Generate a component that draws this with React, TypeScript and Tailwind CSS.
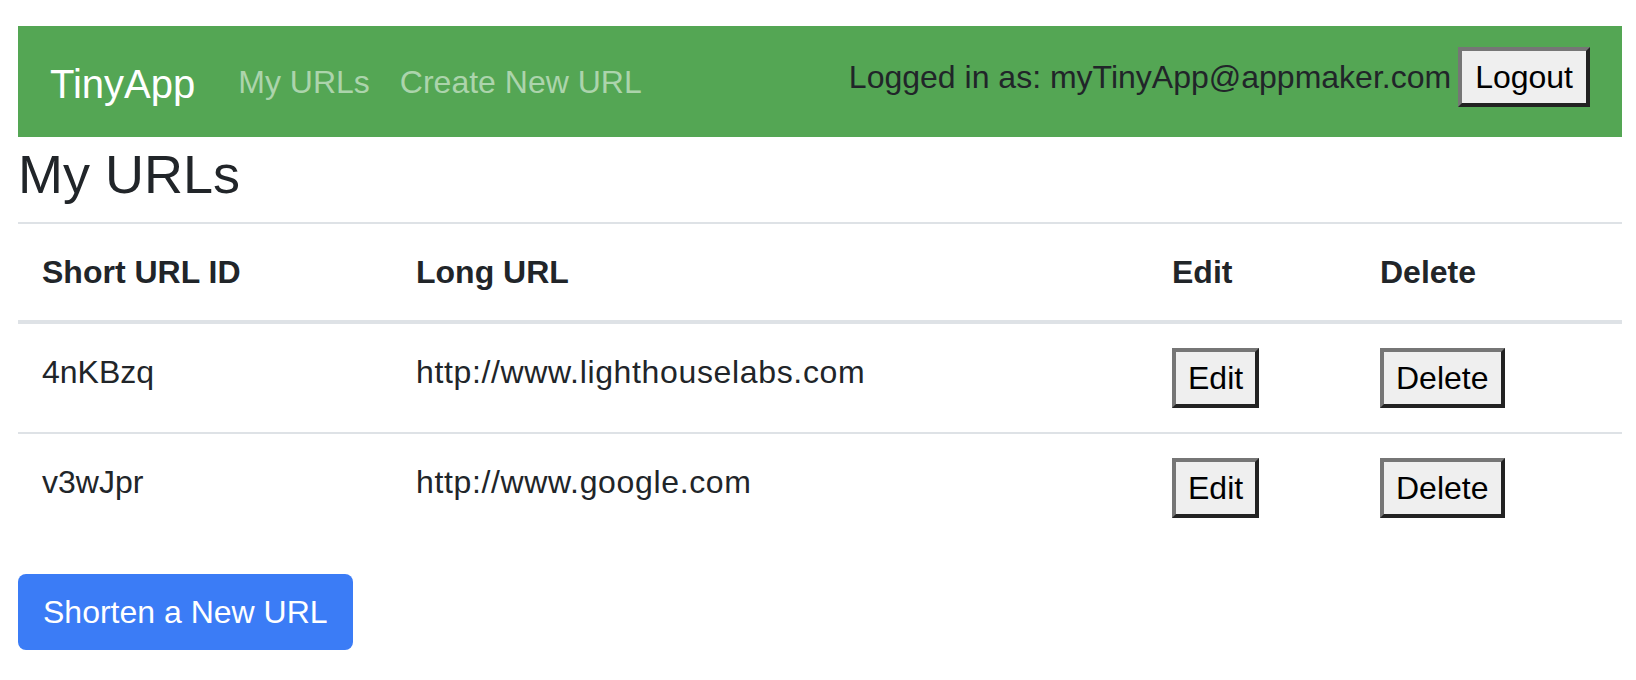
import React from "react";

type UrlRow = {
    id: string;
    longUrl: string;
};

const urls: UrlRow[] = [
    { id: "4nKBzq", longUrl: "http://www.lighthouselabs.com" },
    { id: "v3wJpr", longUrl: "http://www.google.com" },
];

const RawButton: React.FC<{ label: string; pad: string }> = ({ label, pad }) => (
    <button
        className={`h-[60px] border-[4px] border-t-[#767676] border-l-[#767676] border-b-[#222222] border-r-[#222222] bg-[#efefef] text-[32px] leading-[48px] text-black ${pad}`}
    >
        {label}
    </button>
);

export default function App() {
    return (
        <div className="min-h-screen bg-white pt-[26px] pl-[18px] pr-[14px] font-['Liberation_Sans',Arial,sans-serif] text-[#212529]">
            {/* Navbar */}
            <nav className="flex h-[111px] items-center bg-[#54a654] px-[32px]">
                <a className="mt-[4px] mr-[43px] text-[40px] leading-[60px] text-white">TinyApp</a>
                <div className="flex gap-[30px] text-[32px] leading-[48px] text-[#acd4ac]">
                    <a>My URLs</a>
                    <a>Create New URL</a>
                </div>
                <div className="mb-[9px] ml-auto flex items-center gap-[7px]">
                    <span className="text-[32px] leading-[48px] text-[#212529]">
                        Logged in as: myTinyApp@appmaker.com
                    </span>
                    <RawButton label="Logout" pad="px-[13px]" />
                </div>
            </nav>

            {/* Título */}
            <h1 className="mt-[5px] mb-[15px] text-[54px] leading-[1.2] font-normal">My URLs</h1>

            {/* Tabla */}
            <table className="w-full table-fixed border-collapse text-[32px] leading-[48px]">
                <thead>
                    <tr className="border-t-2 border-b-4 border-[#dee2e6]">
                        <th className="w-[374px] p-[24px] text-left font-bold">Short URL ID</th>
                        <th className="w-[756px] p-[24px] text-left font-bold">Long URL</th>
                        <th className="w-[208px] p-[24px] text-left font-bold">Edit</th>
                        <th className="p-[24px] text-left font-bold">Delete</th>
                    </tr>
                </thead>
                <tbody>
                    {urls.map((u, i) => (
                        <tr
                            key={u.id}
                            className={i < urls.length - 1 ? "border-b-2 border-[#dee2e6]" : ""}
                        >
                            <td className="p-[24px] align-top">{u.id}</td>
                            <td className="p-[24px] align-top tracking-[0.65px]">{u.longUrl}</td>
                            <td className="p-[24px] align-top">
                                <RawButton label="Edit" pad="px-[12px]" />
                            </td>
                            <td className="p-[24px] align-top">
                                <RawButton label="Delete" pad="px-[12px]" />
                            </td>
                        </tr>
                    ))}
                </tbody>
            </table>

            {/* Botón */}
            <button className="mt-[32px] rounded-[8px] bg-[#3b7cf6] px-[25px] py-[14px] text-[32px] leading-[48px] text-white">
                Shorten a New URL
            </button>
        </div>
    );
}
